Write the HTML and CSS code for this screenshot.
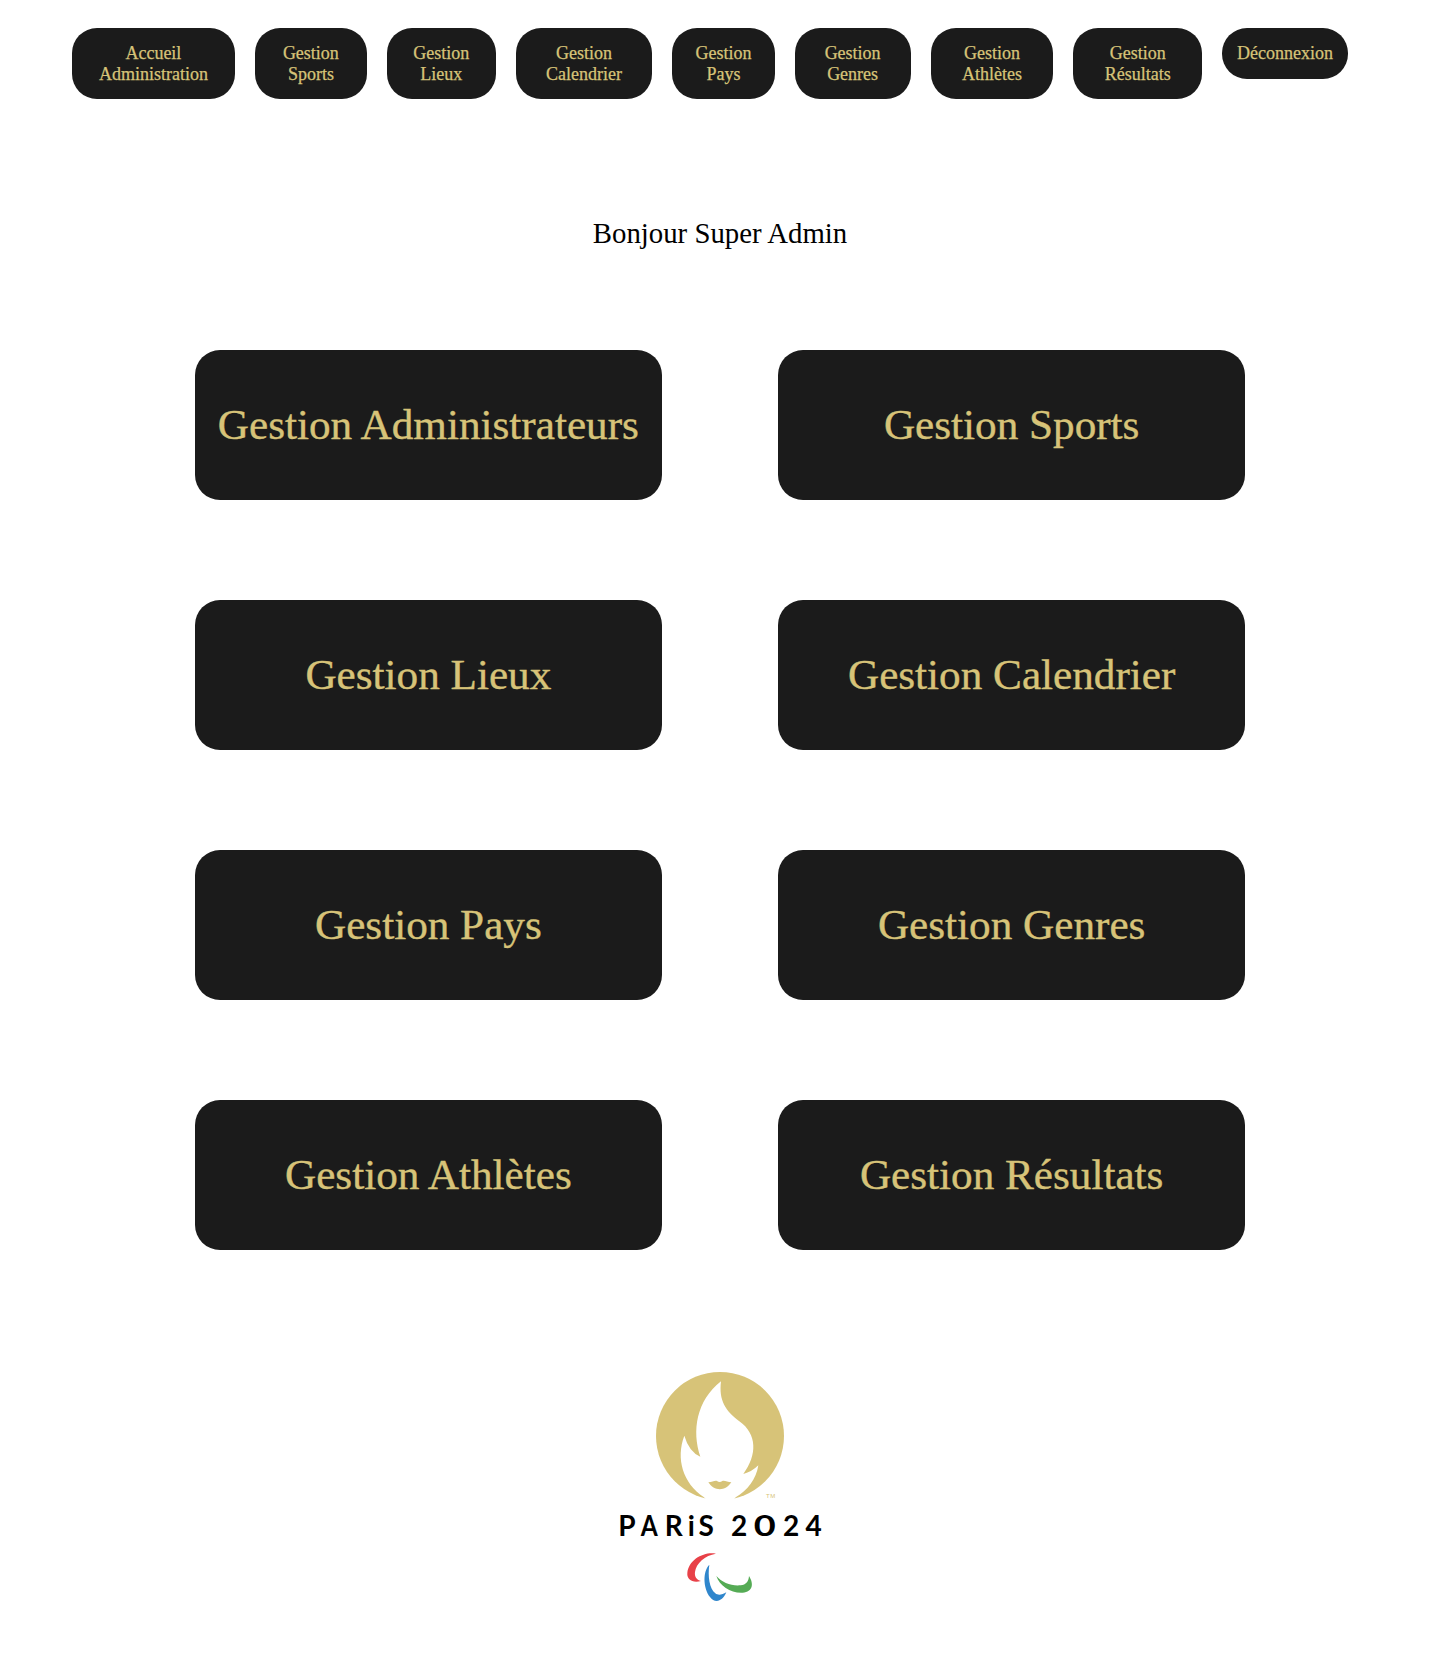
FILE: index.html
```html
<!DOCTYPE html>
<html lang="fr">
<head>
<meta charset="utf-8">
<title>Administration</title>
<link rel="stylesheet" href="styles.css">
</head>
<body>
<header>
  <nav>
    <ul class="menu">
      <li><a>Accueil Administration</a></li>
      <li><a>Gestion Sports</a></li>
      <li><a>Gestion Lieux</a></li>
      <li><a>Gestion Calendrier</a></li>
      <li><a>Gestion Pays</a></li>
      <li><a>Gestion Genres</a></li>
      <li><a>Gestion Athlètes</a></li>
      <li><a>Gestion Résultats</a></li>
      <li><a>Déconnexion</a></li>
    </ul>
  </nav>
</header>
<main>
  <h1 class="greeting">Bonjour Super Admin</h1>
  <div class="cards">
    <a class="card">Gestion Administrateurs</a>
    <a class="card">Gestion Sports</a>
    <a class="card">Gestion Lieux</a>
    <a class="card">Gestion Calendrier</a>
    <a class="card">Gestion Pays</a>
    <a class="card">Gestion Genres</a>
    <a class="card">Gestion Athlètes</a>
    <a class="card">Gestion Résultats</a>
  </div>
</main>
<footer>
  <svg class="logo" viewBox="0 0 240 250" role="img" aria-label="Paris 2024">
    <g transform="translate(40 0) scale(.33333)">
      <circle cx="240" cy="228" r="192" fill="#d7c378"/>
      <path fill="#fff" d="M243 64C236 122 256 152 298 184C352 222 352 285 310 342Q335 336 355 316C349 357 323 391 287 412L276 426H204L192 412C128 369 107 295 133 227Q147 275 181 290C155 213 169 122 243 64Z"/>
      <path fill="#d7c378" d="M205 367C216 367 224 361 231 363Q239 369 247 363C255 361 263 367 274 367C256 395 222 394 205 367Z"/>
    </g>
    <text class="mark" x="166 170.3" y="138">TM</text>
    <text class="wordmark" y="175.8"><tspan x="27">P</tspan><tspan x="49.3" textLength="17" lengthAdjust="spacingAndGlyphs">A</tspan><tspan x="73.7">R</tspan><tspan x="91.4">i</tspan><tspan x="109.7">S </tspan><tspan x="139">2</tspan><tspan x="164.7" textLength="22" lengthAdjust="spacingAndGlyphs">0</tspan><tspan x="191">2</tspan><tspan x="213.7">4</tspan></text>
    <g transform="translate(70 180) scale(.33333)">
      <path fill="#e84148" d="M138 41C103 34 56 58 52 99C50 119 68 130 93 123C79 119 73 109 75 96C78 70 105 46 138 41Z"/>
      <path fill="#2f86cc" d="M118 74C99 92 98 142 120 171C134 190 157 186 169 157C156 165 144 167 136 160C118 145 113 108 118 74Z"/>
      <path fill="#55ab55" d="M139 108C149 138 183 160 218 158C249 156 252 131 237 108C236 125 228 134 212 136C185 139 156 128 139 108Z"/>
    </g>
  </svg>
</footer>
</body>
</html>
```
FILE: styles.css
```css
* {
  box-sizing: border-box;
}

body {
  margin: 0;
  background: #fff;
  color: #000;
  font-family: "Liberation Serif", "Times New Roman", serif;
}

header {
  height: 128px;
  padding: 28px 5% 0;
}

.menu {
  display: flex;
  align-items: flex-start;
  margin: 0;
  padding: 0;
  list-style: none;
}

.menu li {
  margin-right: 20.1px;
}

.menu a {
  display: block;
  min-height: 51px;
  padding: 15px 15px 14px;
  border-radius: 25px;
  background: #1b1b1b;
  color: #d7c378;
  font-size: 18px;
  line-height: 21px;
  text-align: center;
  -webkit-text-stroke: 0.25px #d7c378;
}

.greeting {
  margin: 0;
  padding-top: 88px;
  height: 222px;
  font-size: 28.8px;
  font-weight: 400;
  line-height: 34px;
  text-align: center;
}

.cards {
  display: grid;
  grid-template-columns: repeat(2, 466.67px);
  justify-content: center;
  column-gap: 116.66px;
  row-gap: 100px;
}

.card {
  display: flex;
  align-items: center;
  justify-content: center;
  height: 150px;
  padding-bottom: 2px;
  border-radius: 25px;
  background: #1b1b1b;
  color: #d7c378;
  font-size: 43.2px;
  -webkit-text-stroke: 0.4px #d7c378;
}

footer {
  display: flex;
  justify-content: center;
  height: 423px;
  padding-top: 110px;
}

.logo {
  width: 240px;
  height: 250px;
}

.wordmark {
  font: 700 28px Lato, sans-serif;
  fill: #000;
  text-anchor: middle;
}

.mark {
  font: 400 6px "Liberation Sans", sans-serif;
  fill: #d7c378;
}
```
